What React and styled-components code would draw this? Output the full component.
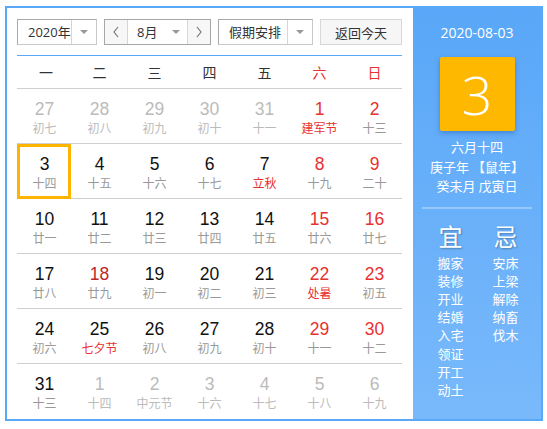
import React from "react";
import styled, { createGlobalStyle } from "styled-components";

const Global = createGlobalStyle`
  html, body { margin: 0; padding: 0; background: #fff; }
  body { font-family: "Noto Sans CJK SC", "Liberation Sans", sans-serif; }
`;

const CJK = `"Noto Sans CJK SC", "Microsoft YaHei", sans-serif`;
const UI = `"Open Sans", "Noto Sans CJK SC", sans-serif`;
const NUM = `"Liberation Sans", Arial, sans-serif`;

const Frame = styled.div`
  margin: 6px 0 0 5px;
  width: 538px;
  height: 415px;
  box-sizing: border-box;
  border: 2px solid #5aa9f8;
  display: flex;
`;

const Main = styled.div`
  width: 406px;
  box-sizing: border-box;
  padding: 11px 11px 0 10px;
  display: flex;
  flex-direction: column;
`;

const Toolbar = styled.div`
  display: flex;
  gap: 7px;
  height: 26px;
  margin-bottom: 10px;
`;

const SelectBox = styled.div`
  display: flex;
  width: ${(p) => p.$w}px;
  box-sizing: border-box;
  border: 1px solid #c9c9c9;
  border-left-color: #a9a9a9;
  border-top-color: #a9a9a9;
  background: #fff;
  font-family: ${UI};
  font-size: 13px;
  color: #333;
`;

const SelectText = styled.div`
  flex: 1;
  min-width: 0;
  white-space: nowrap;
  display: flex;
  align-items: center;
  padding-left: ${(p) => p.$pl}px;
  line-height: 24px;
`;

const Caret = styled.div`
  width: ${(p) => p.$w || 24}px;
  flex: none;
  display: flex;
  align-items: center;
  justify-content: center;
  border-left: ${(p) => (p.$noline ? "none" : "1px solid #d6d6d6")};
  &::after {
    content: "";
    border-left: 4px solid transparent;
    border-right: 4px solid transparent;
    border-top: 4px solid #999;
  }
`;

const MonthGroup = styled.div`
  display: flex;
  width: 107px;
  box-sizing: border-box;
  border: 1px solid #a6a6a6;
  font-family: ${UI};
  font-size: 13px;
  color: #333;
`;

const ArrowBtn = styled.div`
  width: 22px;
  flex: none;
  display: flex;
  align-items: center;
  justify-content: center;
  background: #f7f7f7;
  ${(p) => (p.$left ? "border-right: 1px solid #d6d6d6;" : "border-left: 1px solid #d6d6d6;")}
`;

const MonthInner = styled.div`
  flex: 1;
  display: flex;
  align-items: center;
`;

const TodayBtn = styled.div`
  width: 82px;
  box-sizing: border-box;
  border: 1px solid #d8d8d8;
  background: #f6f6f6;
  font-family: ${UI};
  font-size: 13px;
  color: #333;
  display: flex;
  align-items: center;
  justify-content: center;
  white-space: nowrap;
`;

const Grid = styled.div`
  display: grid;
  grid-template-columns: repeat(7, 55px);
  width: 385px;
`;

const Head = styled.div`
  display: grid;
  grid-template-columns: repeat(7, 55px);
  border-top: 1px solid #5aa9f8;
  border-bottom: 1px solid #cfcfcf;
  box-sizing: border-box;
  height: 35px;
`;

const HeadCell = styled.div`
  display: flex;
  align-items: center;
  justify-content: center;
  font-family: ${CJK};
  font-size: 14px;
  color: ${(p) => (p.$red ? "#e8312f" : "#333")};
  padding-left: ${(p) => (p.$first ? 3 : 0)}px;
`;

const Row = styled.div`
  display: contents;
`;

const Cell = styled.div`
  height: 55px;
  box-sizing: border-box;
  border-bottom: ${(p) => (p.$last ? "none" : "1px solid #cfcfcf")};
  display: flex;
  flex-direction: column;
  align-items: center;
  padding-top: 10px;
  position: relative;
  ${(p) =>
    p.$sel &&
    `&::before {
      content: "";
      position: absolute;
      left: 0; top: 0; width: 54px; height: 55px;
      box-sizing: border-box;
      border: 3px solid #ffb400;
    }`}
`;

const Num = styled.div`
  font-family: ${NUM};
  font-size: 17.5px;
  line-height: 20px;
  color: ${(p) => p.$c};
`;

const Lunar = styled.div`
  margin-top: 1px;
  font-family: ${CJK};
  font-size: 12px;
  line-height: 16px;
  color: ${(p) => p.$c};
`;

const Side = styled.div`
  flex: 1;
  background: linear-gradient(180deg, #59a7f8 0%, #79b9fb 100%);
  color: #fff;
  display: flex;
  flex-direction: column;
  align-items: center;
  padding-top: 15px;
  font-family: ${CJK};
`;

const DateText = styled.div`
  font-size: 14px;
  line-height: 20px;
  font-family: ${UI};
`;

const BigBox = styled.div`
  margin-top: 14px;
  width: 75px;
  height: 74px;
  background: #ffb800;
  border-radius: 2px;
  box-shadow: 0 2px 5px rgba(0, 60, 140, 0.35);
  display: flex;
  align-items: center;
  justify-content: center;
  font-family: ${UI};
  font-weight: 300;
  font-size: 54px;
  line-height: 1;
`;

const InfoLines = styled.div`
  margin-top: 6px;
  font-size: 13px;
  line-height: 19.5px;
  text-align: center;
`;

const Divider = styled.div`
  margin-top: 11px;
  width: 110px;
  height: 2px;
  background: rgba(255, 255, 255, 0.3);
`;

const Columns = styled.div`
  margin-top: 12px;
  padding-left: 2px;
  display: grid;
  grid-template-columns: 44px 44px;
  column-gap: 11px;
`;

const Col = styled.div`
  display: flex;
  flex-direction: column;
  align-items: center;
`;

const ColTitle = styled.div`
  font-size: 24px;
  line-height: 30px;
  text-shadow: 1px 1px 2px rgba(0, 0, 0, 0.3);
  margin-bottom: 3px;
`;

const Item = styled.div`
  font-size: 13px;
  line-height: 18.2px;
`;

const RED = "#e8312f";
const BLACK = "#111";
const GRAY = "#bbb";
const LG = "#999";

const rows = [
  [["27", "初七", 0], ["28", "初八", 0], ["29", "初九", 0], ["30", "初十", 0], ["31", "十一", 0], ["1", "建军节", 1, 1, 1], ["2", "十三", 1, 1]],
  [["3", "十四", 1, 0, 0, 1], ["4", "十五", 1], ["5", "十六", 1], ["6", "十七", 1], ["7", "立秋", 1, 0, 1], ["8", "十九", 1, 1], ["9", "二十", 1, 1]],
  [["10", "廿一", 1], ["11", "廿二", 1], ["12", "廿三", 1], ["13", "廿四", 1], ["14", "廿五", 1], ["15", "廿六", 1, 1], ["16", "廿七", 1, 1]],
  [["17", "廿八", 1], ["18", "廿九", 1, 2], ["19", "初一", 1], ["20", "初二", 1], ["21", "初三", 1], ["22", "处暑", 1, 1, 1], ["23", "初五", 1, 1]],
  [["24", "初六", 1], ["25", "七夕节", 1, 0, 1], ["26", "初八", 1], ["27", "初九", 1], ["28", "初十", 1], ["29", "十一", 1, 1], ["30", "十二", 1, 1]],
  [["31", "十三", 1], ["1", "十四", 0], ["2", "中元节", 0], ["3", "十六", 0], ["4", "十七", 0], ["5", "十八", 0], ["6", "十九", 0]],
];

const weekdays = ["一", "二", "三", "四", "五", "六", "日"];

const Chevron = ({ dir }) => (
  <svg width="8" height="12" viewBox="0 0 8 12">
    <path
      d={dir === "l" ? "M6 1 L2 6 L6 11" : "M2 1 L6 6 L2 11"}
      fill="none"
      stroke="#777"
      strokeWidth="1.2"
    />
  </svg>
);

export default function App() {
  return (
    <>
      <Global />
      <Frame>
        <Main>
          <Toolbar>
            <SelectBox $w={80}>
              <SelectText $pl={10}>2020年</SelectText>
              <Caret />
            </SelectBox>
            <MonthGroup>
              <ArrowBtn $left>
                <Chevron dir="l" />
              </ArrowBtn>
              <MonthInner>
                <SelectText $pl={9}>8月</SelectText>
                <Caret $noline $w={22} />
              </MonthInner>
              <ArrowBtn>
                <Chevron dir="r" />
              </ArrowBtn>
            </MonthGroup>
            <SelectBox $w={95}>
              <SelectText $pl={10}>假期安排</SelectText>
              <Caret />
            </SelectBox>
            <TodayBtn>返回今天</TodayBtn>
          </Toolbar>
          <Head>
            {weekdays.map((w, i) => (
              <HeadCell key={w} $red={i >= 5} $first={i === 0}>
                {w}
              </HeadCell>
            ))}
          </Head>
          <Grid>
            {rows.map((r, ri) => (
              <Row key={ri}>
                {r.map(([n, l, cur, red, fest, sel], ci) => {
                  const numC = !cur ? GRAY : red === 2 ? "#c0282a" : red ? RED : BLACK;
                  const lunC = !cur ? GRAY : fest ? RED : LG;
                  return (
                    <Cell key={ci} $last={ri === rows.length - 1} $sel={!!sel}>
                      <Num $c={numC}>{n}</Num>
                      <Lunar $c={lunC}>{l}</Lunar>
                    </Cell>
                  );
                })}
              </Row>
            ))}
          </Grid>
        </Main>
        <Side>
          <DateText>2020-08-03</DateText>
          <BigBox>3</BigBox>
          <InfoLines>
            <div>六月十四</div>
            <div>庚子年 【鼠年】</div>
            <div>癸未月 戊寅日</div>
          </InfoLines>
          <Divider />
          <Columns>
            <Col>
              <ColTitle>宜</ColTitle>
              {["搬家", "装修", "开业", "结婚", "入宅", "领证", "开工", "动土"].map((t) => (
                <Item key={t}>{t}</Item>
              ))}
            </Col>
            <Col>
              <ColTitle>忌</ColTitle>
              {["安床", "上梁", "解除", "纳畜", "伐木"].map((t) => (
                <Item key={t}>{t}</Item>
              ))}
            </Col>
          </Columns>
        </Side>
      </Frame>
    </>
  );
}
